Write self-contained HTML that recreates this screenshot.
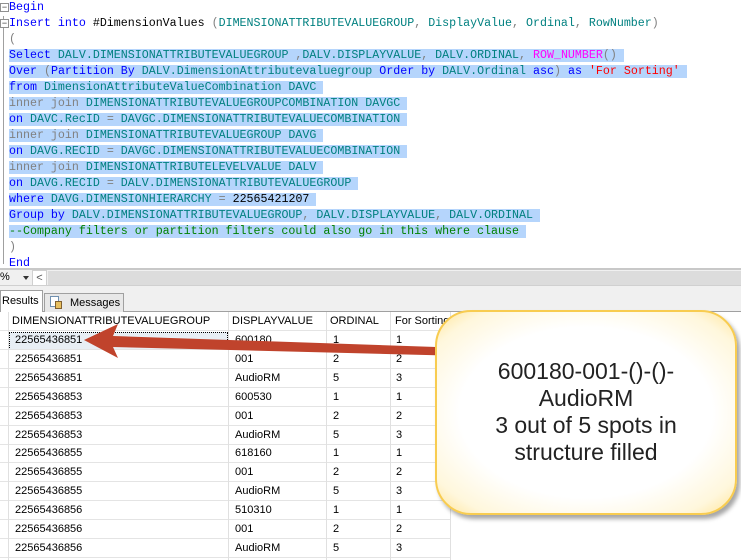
<!DOCTYPE html>
<html><head><meta charset="utf-8"><style>
*{margin:0;padding:0;box-sizing:border-box}
body{width:741px;height:560px;overflow:hidden;background:#fff;position:relative;font-family:"Liberation Sans",sans-serif}
.code{position:absolute;left:0;top:0;width:741px;height:268px;background:#fff}
.ln{position:absolute;left:9px;height:16px;line-height:16px;font-family:"Liberation Mono",monospace;font-size:11.65px;white-space:pre;color:#008080}
.hl{background:#b5d5fc;padding-right:7px}
.k{color:#0000ff}.g{color:#808080}.m{color:#ff00ff}.r{color:#ff0000}.c{color:#008000}.b{color:#000}
.gut{position:absolute;left:3px;border-left:1px solid #a0a0a0}
.box{position:absolute;left:0;width:9px;height:9px;border:1px solid #909090;background:#fff;font-size:9px;line-height:7px;text-align:center;color:#333}
.grid{position:absolute;left:0;top:312px;width:741px;height:248px;background:#fff}
.row{position:absolute;left:0;width:450px;height:19px;border-bottom:1px solid #e4e4e4;font-size:11px;line-height:18px;color:#000}
.row span{position:absolute;top:0}
.vl{position:absolute;top:0;bottom:0;border-left:1px solid #e0e0e0}
</style></head><body>
<div class="code">
<div class="gut" style="top:16px;height:248px"></div>
<div class="box" style="top:3px">−</div>
<div class="box" style="top:19px">−</div>
<div class="ln k" style="top:0px">Begin</div>
<div class="ln" style="top:16px"><span class="k">Insert into </span><span class="b">#DimensionValues </span><span class="g">(</span>DIMENSIONATTRIBUTEVALUEGROUP<span class="g">,</span> DisplayValue<span class="g">,</span> Ordinal<span class="g">,</span> RowNumber<span class="g">)</span></div>
<div class="ln g" style="top:32px">(</div>
<div class="ln" style="top:48px"><span class="hl"><span class="k">Select</span> DALV.DIMENSIONATTRIBUTEVALUEGROUP <span class="g">,</span>DALV.DISPLAYVALUE<span class="g">,</span> DALV.ORDINAL<span class="g">,</span> <span class="m">ROW_NUMBER</span><span class="g">()</span></span></div>
<div class="ln" style="top:64px"><span class="hl"><span class="k">Over</span> <span class="g">(</span><span class="k">Partition By</span> DALV.DimensionAttributevaluegroup <span class="k">Order by</span> DALV.Ordinal <span class="k">asc</span><span class="g">)</span> <span class="k">as</span> <span class="r">'For Sorting'</span></span></div>
<div class="ln" style="top:80px"><span class="hl"><span class="k">from</span> DimensionAttributeValueCombination DAVC</span></div>
<div class="ln" style="top:96px"><span class="hl"><span class="g">inner join</span> DIMENSIONATTRIBUTEVALUEGROUPCOMBINATION DAVGC</span></div>
<div class="ln" style="top:112px"><span class="hl"><span class="k">on</span> DAVC.RecID <span class="g">=</span> DAVGC.DIMENSIONATTRIBUTEVALUECOMBINATION</span></div>
<div class="ln" style="top:128px"><span class="hl"><span class="g">inner join</span> DIMENSIONATTRIBUTEVALUEGROUP DAVG</span></div>
<div class="ln" style="top:144px"><span class="hl"><span class="k">on</span> DAVG.RECID <span class="g">=</span> DAVGC.DIMENSIONATTRIBUTEVALUECOMBINATION</span></div>
<div class="ln" style="top:160px"><span class="hl"><span class="g">inner join</span> DIMENSIONATTRIBUTELEVELVALUE DALV</span></div>
<div class="ln" style="top:176px"><span class="hl"><span class="k">on</span> DAVG.RECID <span class="g">=</span> DALV.DIMENSIONATTRIBUTEVALUEGROUP</span></div>
<div class="ln" style="top:192px"><span class="hl"><span class="k">where</span> DAVG.DIMENSIONHIERARCHY <span class="g">=</span> <span class="b">22565421207</span></span></div>
<div class="ln" style="top:208px"><span class="hl"><span class="k">Group by</span> DALV.DIMENSIONATTRIBUTEVALUEGROUP<span class="g">,</span> DALV.DISPLAYVALUE<span class="g">,</span> DALV.ORDINAL</span></div>
<div class="ln" style="top:224px"><span class="hl"><span class="c">--Company filters or partition filters could also go in this where clause</span></span></div>
<div class="ln g" style="top:240px">)</div>
<div class="ln k" style="top:256px">End</div>
</div>
<div style="position:absolute;left:0;top:268px;width:741px;height:2px;background:#c8c8c8"></div>
<div style="position:absolute;left:0;top:270px;width:741px;height:16px;background:#f0f0f0;border-bottom:1px solid #d0d0d0"></div>
<div style="position:absolute;left:0;top:270px;font-size:11px;line-height:15px;color:#000">%</div>
<div style="position:absolute;left:23px;top:276px;width:0;height:0;border-left:3px solid transparent;border-right:3px solid transparent;border-top:4px solid #333"></div>
<div style="position:absolute;left:32px;top:270px;width:15px;height:16px;background:#fff;border:1px solid #d0d0d0;font-size:11px;line-height:14px;text-align:center;color:#555">&lt;</div>
<div style="position:absolute;left:48px;top:271px;width:693px;height:14px;background:#dcdcdc"></div>
<div style="position:absolute;left:0;top:286px;width:741px;height:26px;background:#f0f0f0;border-bottom:1px solid #a0a0a0"></div>
<div style="position:absolute;left:0;top:290px;width:43px;height:23px;background:#fff;border:1px solid #a0a0a0;border-bottom:none;font-size:11px;line-height:20px;padding-left:1px">Results</div>
<div style="position:absolute;left:44px;top:293px;width:80px;height:19px;background:#e8e8e8;border:1px solid #a0a0a0;border-bottom:none;font-size:11px;line-height:18px;padding-left:25px">Messages</div>
<div style="position:absolute;left:50px;top:296px;width:9px;height:11px;background:#fff;border:1px solid #7090b0"></div>
<div style="position:absolute;left:55px;top:301px;width:7px;height:8px;background:#e8c060;border:1px solid #806030"></div>
<div class="grid">
<div style="position:absolute;left:9px;top:20px;width:219px;height:18px;border:1px dotted #000;background:#e8eef4"></div>
<div class="row" style="top:0;height:19px"><span style="left:12px">DIMENSIONATTRIBUTEVALUEGROUP</span><span style="left:232px">DISPLAYVALUE</span><span style="left:330px">ORDINAL</span><span style="left:395px">For Sorting</span></div>
<div id="rows"></div>
<div class="vl" style="left:8px"></div><div class="vl" style="left:228px"></div><div class="vl" style="left:326px"></div><div class="vl" style="left:390px"></div><div class="vl" style="left:450px"></div>
</div>
<script>
var d=[["22565436851","600180",1,1],["22565436851","001",2,2],["22565436851","AudioRM",5,3],["22565436853","600530",1,1],["22565436853","001",2,2],["22565436853","AudioRM",5,3],["22565436855","618160",1,1],["22565436855","001",2,2],["22565436855","AudioRM",5,3],["22565436856","510310",1,1],["22565436856","001",2,2],["22565436856","AudioRM",5,3]];
var h="";d.forEach(function(r,i){h+='<div class="row" style="top:'+(19+i*18.9)+'px"><span style="left:15px">'+r[0]+'</span><span style="left:235px">'+r[1]+'</span><span style="left:333px">'+r[2]+'</span><span style="left:396px">'+r[3]+'</span></div>'});
document.getElementById("rows").innerHTML=h;
</script>
<svg style="position:absolute;left:0;top:0" width="741" height="560">
<polygon points="84,340 118,324 113,336 466,348 466,356 113,347 118,358" fill="#c0432c"/>
</svg>
<div style="position:absolute;left:435px;top:310px;width:302px;height:205px;border-radius:36px;background:radial-gradient(ellipse at center,#fff 60%,#fff7dc 85%,#ffe59a 100%);border:2px solid #f8cc50;box-shadow:3px 4px 4px rgba(0,0,0,0.35);display:flex;align-items:center;justify-content:center;text-align:center;font-size:23px;line-height:27px;color:#222;padding-bottom:2px">600180-001-()-()-<br>AudioRM<br>3 out of 5 spots in<br>structure filled</div>
</body></html>
